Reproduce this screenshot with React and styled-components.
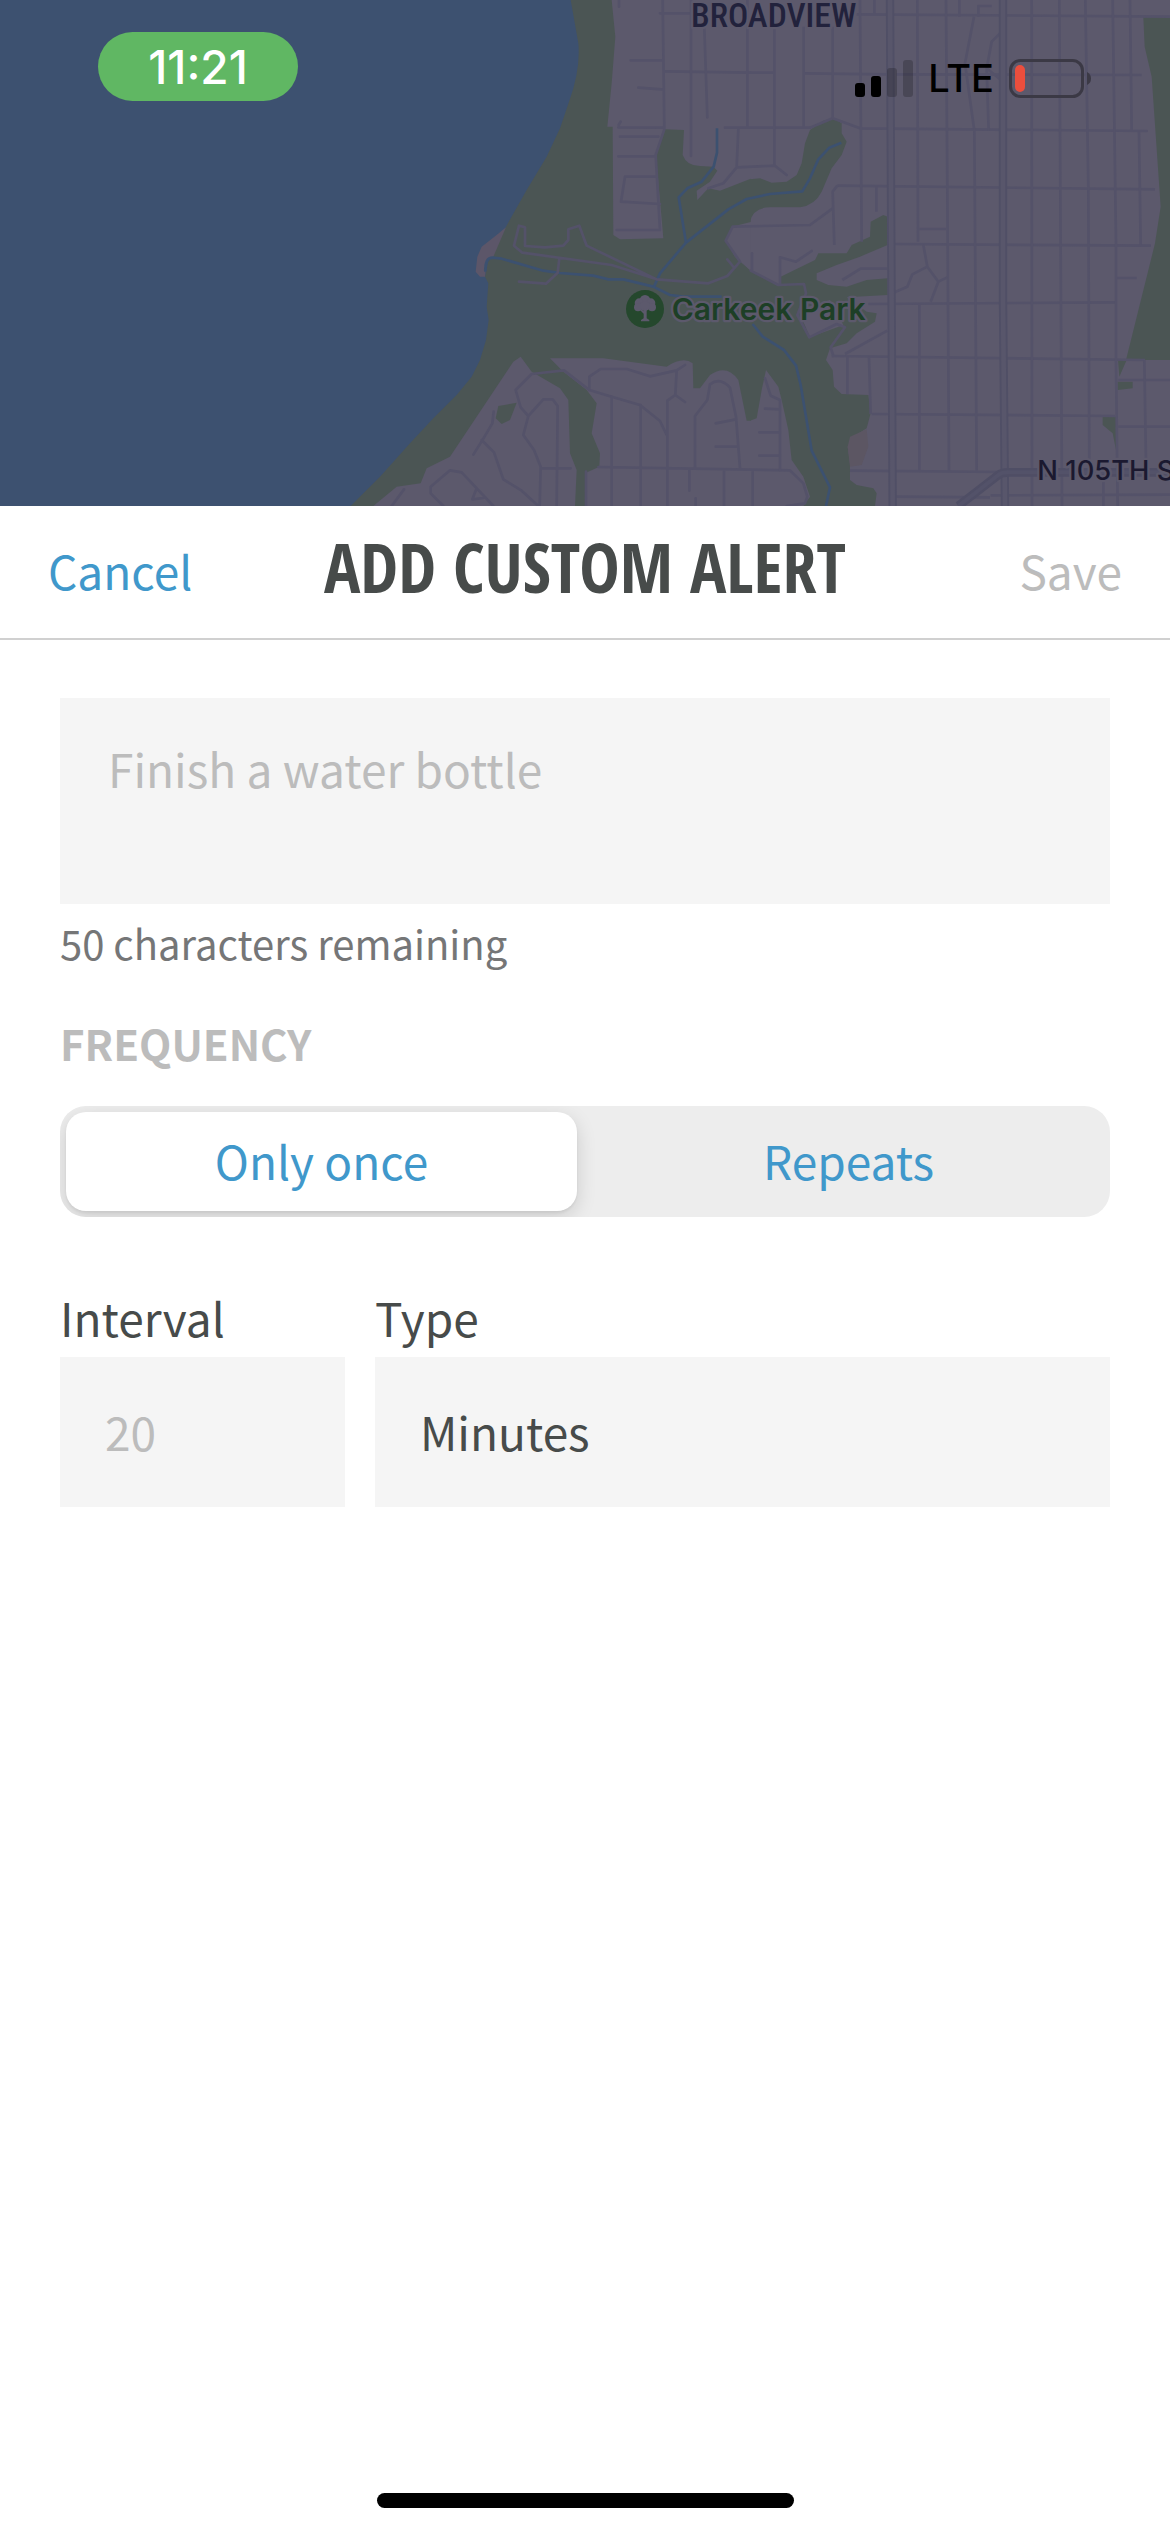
import React, { useState } from 'react'
import styled, { createGlobalStyle } from 'styled-components'

const GlobalStyle = createGlobalStyle`
  * {
    box-sizing: border-box;
  }
  body {
    margin: 0;
    background: #fff;
    font-family: 'Noto Sans CJK SC', 'Noto Sans', sans-serif;
    font-size: 46px;
    line-height: 60px;
    color: #474b4a;
  }
  button, input, select, textarea {
    font: inherit;
    color: inherit;
    border: 0;
    border-radius: 0;
    margin: 0;
  }
`
const Screen = styled.div`
  min-height: 100vh;
  display: flex;
  flex-direction: column;
`
const MapHeader = styled.header`
  position: relative;
  height: 506px;
  overflow: hidden;
  background: #5c596c;
`
const MapDrawing = styled.svg`
  position: absolute;
  inset: 0;
  width: 100%;
  height: 100%;
`
const StatusBar = styled.div`
  position: relative;
  display: flex;
  justify-content: space-between;
  align-items: flex-start;
  padding: 32px 78px 0 98px;
  font-family: Inter, 'Liberation Sans', sans-serif;
  font-weight: 500;
`
const Time = styled.time`
  width: 200px;
  height: 69px;
  border-radius: 35px;
  background: #60b763;
  color: #fff;
  font-size: 46px;
  line-height: 70px;
  text-align: center;
`
const StatusIcons = styled.div`
  display: flex;
  align-items: center;
  gap: 15px;
  padding-top: 16px;
  color: #000;
  font-size: 38px;
`
const Sheet = styled.main`
  flex: 1;
  display: flex;
  flex-direction: column;
  background: #fff;
`
const TitleBar = styled.div`
  display: grid;
  grid-template-columns: 1fr auto 1fr;
  align-items: center;
  height: 134px;
  padding: 0 48px 4px;
  border-bottom: 2px solid #d0d0d0;
`
const BarButton = styled.button`
  justify-self: ${props => props.$side};
  padding: 0;
  background: none;
  color: #4098cb;

  &:disabled {
    color: #bcbcbc;
  }
`
const Title = styled.h1`
  margin: 0;
  padding-bottom: 6px;
  font-family: 'Open Sans Condensed', 'Noto Sans ExtraCondensed', 'Roboto Condensed', sans-serif;
  font-size: 68px;
  line-height: 84px;
  font-weight: 800;
  white-space: nowrap;
`
const Form = styled.form`
  display: flex;
  flex-direction: column;
  padding: 58px 60px 0;
`
const Message = styled.textarea`
  display: block;
  width: 100%;
  height: 206px;
  padding: 40px 48px;
  background: #f5f5f5;
  resize: none;
  outline: 0;

  &::placeholder {
    color: #bcbcbc;
  }
`
const Remaining = styled.p`
  margin: 12px 0 46px;
  font-size: 40px;
  line-height: 54px;
  color: #757677;
`
const Frequency = styled.fieldset`
  min-width: 0;
  margin: 0 0 70px;
  padding: 0;
  border: 0;
`
const Legend = styled.legend`
  padding: 0;
  margin-bottom: 36px;
  font-size: 42px;
  line-height: 54px;
  font-weight: 700;
  color: #bcbcbc;
`
const Segments = styled.div`
  display: grid;
  grid-template-columns: 1fr 1fr;
  gap: 16px;
  height: 111px;
  padding: 6px;
  border-radius: 26px;
  background: #ededed;
  overflow: hidden;
`
const Segment = styled.label`
  display: flex;
  align-items: center;
  justify-content: center;
  padding-bottom: 4px;
  border-radius: 20px;
  color: #4098cb;

  &:has(input:checked) {
    background: #fff;
    box-shadow: 0 6px 20px rgba(0, 0, 0, 0.14), 0 2px 3px rgba(0, 0, 0, 0.06);
  }
  input {
    position: absolute;
    opacity: 0;
  }
`
const FieldRow = styled.div`
  display: grid;
  grid-template-columns: 285px 1fr;
  gap: 30px;
`
const Field = styled.div`
  display: flex;
  flex-direction: column;
  gap: 10px;
  min-width: 0;
`
const TextField = styled.input`
  width: 100%;
  height: 150px;
  padding: 0 45px 2px;
  background: #f5f5f5;
  outline: 0;

  &::placeholder {
    color: #bcbcbc;
  }
`
const Picker = styled.select`
  width: 100%;
  height: 150px;
  padding: 0 45px 2px;
  background: #f5f5f5;
  appearance: none;
  outline: 0;
`
const HomeIndicator = styled.div`
  width: 417px;
  height: 15px;
  margin: auto auto 24px;
  border-radius: 8px;
  background: #000;
`

function ParkMap() {
  return (
    <MapDrawing viewBox="-990 0 3510 1518" preserveAspectRatio="xMidYMid slice" aria-hidden="true">
      <rect x="-990" width="3510" height="1518" fill="#5c596c" />

      {/* woods */}
      <g fill="#4b5554">
        <path d="M600 0H845L856 110L845 250L832 380H848L850 705L870 718L1000 715L990 600L978 465L1003 388L1062 390L1058 465Q1070 498 1110 498L1150 500L1162 512L1140 545L1100 572L1102 600L1135 565L1170 572L1262 536V666L1205 680L1187 720L1215 770L1262 811V1262H1250L1225 1140Q1190 1090 1140 1125L1110 1165L1090 1165L1088 1090Q1060 1068 1010 1100L820 1075H660L700 1115L770 1170L800 1210L785 1300L810 1360L808 1400L765 1420V1518H735L740 1410L720 1360L715 1200L690 1165L605 1115L572 1070L550 1085L460 1220L360 1370L290 1405L272 1450L200 1460L130 1518H0L400 700Z" />
        <g transform="translate(1260 0)">
          <path d="M0 538L30 535L65 548L110 545L140 525L155 490L165 430L180 390L220 362L250 355L275 370V400L290 425L275 465L245 505L215 575Q195 615 150 622H60Q10 622 0 665Z" />
          <path d="M0 810L90 855L92 830L195 780L205 760H290L305 735L360 710L362 665L400 645L413 650V735L330 770L260 795L200 820V840L235 855L290 860L350 840L413 835V885L290 892L350 935L380 940L375 965L320 1000L290 1030L240 1045L228 1080L248 1110L252 1160L275 1182L355 1185L362 1240L350 1285L310 1310L293 1340L300 1390V1440L320 1455L370 1465L380 1480L375 1518H160L180 1490L160 1430L125 1380L115 1290L95 1200L85 1160L48 1110L35 1170L20 1255L0 1262Z" />
          <path d="M1180 52H1260V1080H1130L1108 1130L1104 1080H1128L1215 730L1232 620L1205 230L1184 140ZM1103 1145H1148V1165L1103 1170ZM1058 1250H1098V1350L1088 1300L1058 1275Z" />
        </g>
        <path d="M505 1218L560 1208L540 1260L515 1272L497 1255Z" />
      </g>
      <path d="M1187 720L1205 680H1262V812L1215 770Z" fill="#5c596c" />
      <path d="M1405 930L1500 900L1540 975L1440 1012Z" fill="#5c596c" />
      <path d="M1610 1288L1560 1310L1553 1340L1560 1400L1595 1395L1615 1340Z" fill="#5c5663" />

      {/* sound and beach */}
      <path d="M-990 0H722L745 130Q752 210 717 305L690 385L650 470L590 570L528 680L480 760L465 830L475 850L470 920L476 960L468 1020L450 1080L425 1130L380 1185L310 1255L240 1330L150 1430L62 1518H-990Z" fill="#3d5170" />
      <path d="M528 682L500 705L455 740L442 770L437 815L450 830H465L470 780L490 770Z" fill="#5c5669" />

      {/* creeks */}
      <g fill="none" stroke="#3c5170" strokeWidth="8" strokeLinejoin="round">
        <path d="M466 815Q464 773 488 773L515 776L640 812L690 819L790 827L835 838H880L970 860L1020 885L1060 890H1175" />
        <path d="M972 860L990 820L1068 728L1195 628L1250 597L1320 582L1417 574L1440 535L1465 478L1498 443L1534 428" />
        <path d="M1161 385V458L1151 500L1115 545L1072 565L1046 592L1068 728" />
        <path d="M1268 972L1298 1010L1362 1050L1398 1097L1412 1155L1445 1352L1500 1462L1488 1518" />
      </g>

      {/* streets, west half */}
      <g fill="none" stroke="#545269" strokeWidth="8" strokeLinejoin="round" strokeLinecap="round">
        <path d="M867 0V20M998 0L1003 388L977 465L990 690H860M990 40H1090M902 181H995M925 263L995 268M1005 214L1260 218M865 382L1000 383M870 410H985M865 469H975M978 530H885L873 605L990 612M866 375L872 365" />
        <path d="M1083 0V468M1123 85L1132 352M1252 0V383M1185 383H1440L1508 355L1590 385L2450 393M1225 388L1220 502L1180 550L1135 565M1220 502L1335 497L1370 525" />
        <path d="M585 738V682L567 677L552 737L577 758L845 795L980 838L1135 850L1192 828L1230 785L1187 722L1208 680L1440 675L1508 625M585 738L645 742L700 737L715 720V688L748 677L770 737L980 838M688 775L683 818L648 851L567 845M1192 778L1213 804" />
        <path d="M1262 812L1345 855L1422 852L1428 880L1402 945L1438 1012L1520 972L1545 982L1502 1042L1510 1068M1350 850V772L1398 785L1445 753M1266 760V810" />
        <path d="M430 1364L460 1316L487 1270L491 1235M455 1320L492 1357L520 1438L575 1472L625 1518M572 1222L595 1248L640 1198H668L683 1218L680 1518M595 1248L580 1305L612 1350L632 1400L629 1518M632 1405H722M572 1222L557 1170L605 1122L702 1111L778 1170L845 1190L930 1215L990 1263L1010 1305" />
        <path d="M778 1170V1130L812 1107H890L960 1129L1040 1111L1065 1095M1040 1111L1036 1185L1012 1202V1518M1036 1185L1065 1206M845 1190V1518M932 1215V1518M805 1401L1380 1411L1420 1450L1432 1490L1425 1510L1370 1518M768 1415V1518M1095 1405V1248L1132 1200L1140 1153Q1170 1130 1200 1163L1218 1250L1230 1405M1157 1270L1218 1258M1157 1340H1225M1078 1410V1472M1182 1411V1518M1097 1495V1518M1268 1411V1518" />
        <path d="M185 1518L222 1468M340 1518L302 1480V1460L360 1411L395 1417L490 1518M440 1465L427 1498L460 1494" />
        <path d="M1305 1135L1322 1187L1350 1200V1410M1305 1226L1348 1228M1288 1297H1348M1288 1367H1348" />
      </g>

      {/* streets, east half */}
      <g transform="translate(1260 0)" fill="none" stroke="#545269" strokeWidth="8" strokeLinejoin="round">
        <path d="M320 43L1260 50M0 218H72M162 220L410 223M440 223L1175 225M262 557L1215 568M430 732L1203 737M355 912L1095 907M245 1068L1185 1080M365 1242L1095 1248M300 1412L760 1416M435 1490L720 1492M722 1486L1260 1484M1105 1140H1260M1105 1280H1260M1100 834H1160" />
        <path d="M73 85V495M161 80V383M248 80V355M330 0L335 725M373 0V42M502 0L504 725M588 0L592 560L597 1412M628 0V50M673 385L680 1412M845 0L846 1518M928 0L936 1518M1006 0L1015 560L1018 1395M1088 0L1098 730V1080L1103 1518M1140 0L1145 390M1167 395L1172 735M1183 1080L1188 1390M508 910V1412M292 1070V1183M357 1070L362 1242M379 560V635M262 557L248 575L253 735M1060 1440V1518" />
        <path d="M685 50V18H725M672 50L645 190L672 385M750 100L725 125L710 205L716 393M710 205L750 238M508 687H588M520 735L532 800L565 845L542 905M532 800L487 823L472 860L430 878M565 845L592 832M277 840L332 806H412M285 1062L412 992" />
      </g>
      <g fill="none">
        <path d="M1680 0L1688 1518M2019 0V900L2025 1518" stroke="#504f66" strokeWidth="25" />
        <path d="M1680 0L1688 1518M2019 0V900L2025 1518" stroke="#58566b" strokeWidth="14" />
        <path d="M1885 1518L2005 1425Q2015 1417 2035 1417H2520" stroke="#4f4e65" strokeWidth="26" />
        <path d="M1885 1518L2005 1425Q2015 1417 2035 1417H2520" stroke="#535269" strokeWidth="12" />
      </g>

      {/* labels */}
      <g fontFamily="Inter, sans-serif" stroke="#5c596c" strokeWidth="14" strokeLinejoin="round" paintOrder="stroke">
        <text x="1083" y="81" fontFamily="'Roboto Condensed', Roboto, sans-serif" fontSize="101" fontWeight="500" fill="#22223c">BROADVIEW</text>
        <text x="1025" y="961" fontSize="90" fontWeight="600" fill="#1d3f26">Carkeek Park</text>
        <text x="2122" y="1441" fontSize="82" fontWeight="500" fill="#1b1930">N 105TH S</text>
      </g>
      <circle cx="945" cy="927" r="57" fill="#25482d" />
      <g fill="#5c596c">
        <circle cx="945" cy="901" r="16" />
        <circle cx="928" cy="909" r="14" />
        <circle cx="962" cy="909" r="14" />
        <circle cx="924" cy="922" r="12" />
        <circle cx="966" cy="922" r="12" />
        <circle cx="945" cy="918" r="15" />
        <path d="M940 925H950V955L958 960V964H933V960L941 955V941L930 930L934 927L941 934Z" />
      </g>
    </MapDrawing>
  )
}

function SignalIcon() {
  return (
    <svg width="58" height="37" viewBox="0 0 58 37" aria-label="Signal">
      <rect x="0" y="23" width="10" height="14" rx="3" />
      <rect x="16" y="16" width="10" height="21" rx="3" />
      <rect x="32" y="8" width="10" height="29" rx="3" fillOpacity="0.2" />
      <rect x="48" y="0" width="10" height="37" rx="3" fillOpacity="0.2" />
    </svg>
  )
}

function BatteryIcon() {
  return (
    <svg width="83" height="39" viewBox="0 0 83 39" aria-label="Battery low">
      <rect x="1.5" y="1.5" width="72" height="36" rx="10" fill="none" stroke="#3b3945" strokeWidth="3" />
      <path d="M78 13Q82 15 82 19.500Q82 24 78 26Z" fill="#3b3945" />
      <rect x="6" y="6" width="10" height="27" rx="5" fill="#eb4e3d" />
    </svg>
  )
}

function App() {
  const [message, setMessage] = useState('')
  const [frequency, setFrequency] = useState('once')

  return (
    <>
      <GlobalStyle />
      <Screen>
        <MapHeader>
          <ParkMap />
          <StatusBar>
            <Time>11:21</Time>
            <StatusIcons>
              <SignalIcon />
              <span>LTE</span>
              <BatteryIcon />
            </StatusIcons>
          </StatusBar>
        </MapHeader>
        <Sheet>
          <TitleBar>
            <BarButton type="button" $side="start">Cancel</BarButton>
            <Title>ADD CUSTOM ALERT</Title>
            <BarButton type="submit" form="alert-form" $side="end" disabled={!message}>Save</BarButton>
          </TitleBar>
          <Form id="alert-form" onSubmit={e => e.preventDefault()}>
            <Message
              aria-label="Alert message"
              placeholder="Finish a water bottle"
              maxLength={50}
              value={message}
              onChange={e => setMessage(e.target.value)}
            />
            <Remaining>{50 - message.length} characters remaining</Remaining>
            <Frequency>
              <Legend>FREQUENCY</Legend>
              <Segments>
                <Segment>
                  <input type="radio" name="frequency" checked={frequency === 'once'} onChange={() => setFrequency('once')} />
                  Only once
                </Segment>
                <Segment>
                  <input type="radio" name="frequency" checked={frequency === 'repeats'} onChange={() => setFrequency('repeats')} />
                  Repeats
                </Segment>
              </Segments>
            </Frequency>
            <FieldRow>
              <Field>
                <label htmlFor="interval">Interval</label>
                <TextField id="interval" inputMode="numeric" placeholder="20" />
              </Field>
              <Field>
                <label htmlFor="type">Type</label>
                <Picker id="type">
                  <option>Minutes</option>
                  <option>Hours</option>
                </Picker>
              </Field>
            </FieldRow>
          </Form>
          <HomeIndicator />
        </Sheet>
      </Screen>
    </>
  )
}

export default App
